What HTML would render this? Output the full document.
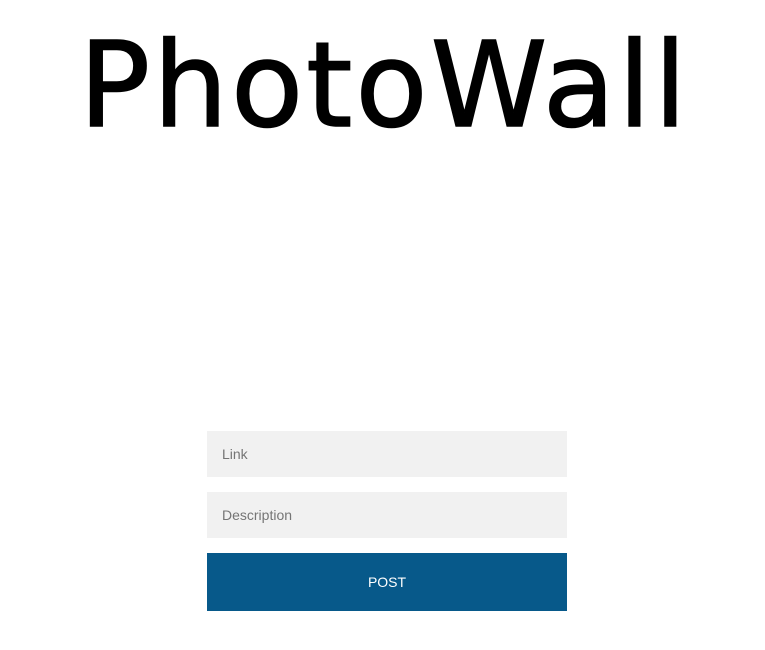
<!DOCTYPE html>
<html><head><meta charset="utf-8"><style>
html,body{margin:0;padding:0;background:#fff;width:765px;height:650px;overflow:hidden}
.title{position:absolute;left:79px;top:0;width:602px;height:150px}
.title span{position:absolute;left:0;top:10px;font-family:"Comic Sans MS","DejaVu Sans",sans-serif;font-size:118px;line-height:150px;color:#000;white-space:nowrap;transform-origin:0 0;letter-spacing:3px;-webkit-text-stroke:1.5px #000}
.in{position:absolute;left:207px;width:360px;height:46px;background:#f1f1f1;font-family:"Liberation Sans",sans-serif;font-size:14px;color:#757575;line-height:46px;box-sizing:border-box;padding-left:15px}
.btn{position:absolute;left:207px;top:553px;width:360px;height:58px;background:#07598a;color:#fff;font-family:"Liberation Sans",sans-serif;font-size:14px;line-height:58px;text-align:center}
</style></head><body>
<div class="title"><span>PhotoWall</span></div>
<div class="in" style="top:431px">Link</div>
<div class="in" style="top:492px">Description</div>
<div class="btn">POST</div>
</body></html>
